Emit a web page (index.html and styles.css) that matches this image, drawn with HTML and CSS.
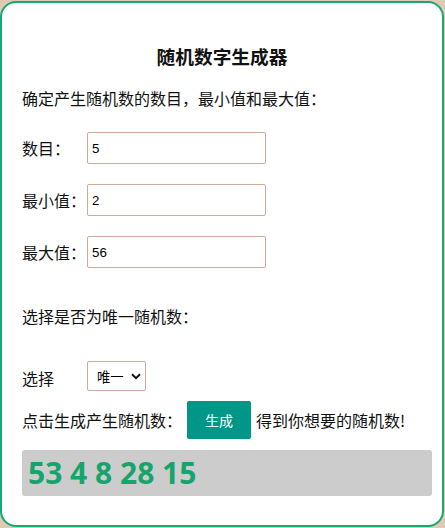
FILE: index.html
```html
<!DOCTYPE html>
<html lang="zh-CN">
<head>
<meta charset="utf-8">
<title>随机数字生成器</title>
<link rel="stylesheet" href="styles.css">
</head>
<body>
<div class="card">
  <h3 class="title">随机数字生成器</h3>
  <p class="intro">确定产生随机数的数目，最小值和最大值：</p>
  <div class="row"><label class="lbl">数目：</label><input class="field" type="text" value="5"></div>
  <div class="row"><label class="lbl">最小值：</label><input class="field" type="text" value="2"></div>
  <div class="row"><label class="lbl">最大值：</label><input class="field" type="text" value="56"></div>
  <p class="question">选择是否为唯一随机数：</p>
  <div class="row select-row">
    <label class="lbl">选择</label>
    <span class="select-wrap">
      <select class="sel"><option>唯一</option><option>不唯一</option></select>
      <svg class="chev" width="10" height="7" viewBox="0 0 10 7"><path d="M1 1.2 L5 5.2 L9 1.2" fill="none" stroke="#111" stroke-width="2"/></svg>
    </span>
  </div>
  <div class="gen-row">
    <span>点击生成产生随机数：</span>
    <button class="btn">生成</button>
    <span>得到你想要的随机数!</span>
  </div>
  <div class="result">53 4 8 28 15</div>
</div>
</body>
</html>
```
FILE: styles.css
```css
html, body {
  margin: 0;
  padding: 0;
}
body {
  background: #dfcab4;
  font-family: "Noto Sans CJK SC", "Noto Sans", sans-serif;
  color: #111;
}
.card {
  box-sizing: border-box;
  margin: 1px 1px 1px 0;
  width: 444px;
  height: 526px;
  background: #fff;
  border: 2px solid #17a874;
  border-radius: 16px;
  padding: 0 10px 0 20px;
  overflow: hidden;
}
.title {
  margin: 41px 10px 0 0;
  font-size: 18.7px;
  line-height: 24px;
  font-weight: bold;
  text-align: center;
}
.intro {
  margin: 18px 0 0 0;
  font-size: 16px;
  line-height: 24px;
}
.row {
  display: flex;
  align-items: center;
  margin-top: 20px;
  height: 32px;
}
.intro + .row {
  margin-top: 22px;
}
.lbl {
  width: 65px;
  font-size: 16px;
  line-height: 24px;
}
.field {
  box-sizing: border-box;
  width: 179px;
  height: 32px;
  border: 1px solid #d0ab9b;
  border-radius: 2px;
  padding: 0 4px;
  margin: 0;
  font-family: "Liberation Sans", Arial, sans-serif;
  font-size: 13.3px;
  color: #000;
  outline: none;
}
.question {
  margin: 36px 0 0 0;
  font-size: 16px;
  line-height: 24px;
}
.select-row {
  margin-top: 33px;
  height: 30px;
}
.select-row .lbl {
  margin-top: 3px;
}
.select-wrap {
  position: relative;
  display: inline-block;
  height: 30px;
}
.sel {
  appearance: none;
  -webkit-appearance: none;
  box-sizing: border-box;
  width: 59px;
  height: 30px;
  margin: 0;
  border: 1px solid #d0ab9b;
  border-radius: 2px;
  background: #fff;
  padding: 0 0 0 9px;
  font-family: "Noto Sans CJK SC", sans-serif;
  font-size: 13.3px;
  color: #000;
  outline: none;
}
.chev {
  position: absolute;
  left: 44px;
  top: 12px;
  pointer-events: none;
}
.gen-row {
  display: flex;
  align-items: center;
  margin-top: 10px;
  height: 38px;
  font-size: 16px;
  line-height: 24px;
}
.btn {
  box-sizing: border-box;
  width: 64px;
  height: 38px;
  margin: 0 5px;
  border: none;
  border-radius: 2px;
  background: #009688;
  color: #fff;
  font-family: "Noto Sans CJK SC", sans-serif;
  font-size: 14px;
  padding: 0;
}
.result {
  box-sizing: border-box;
  margin-top: 11px;
  width: 410px;
  height: 46px;
  background: #cccccc;
  border-radius: 3px;
  padding-left: 6px;
  font-family: "Open Sans", "Noto Sans", sans-serif;
  font-weight: bold;
  font-size: 30px;
  line-height: 46px;
  color: #16a46c;
}
```
